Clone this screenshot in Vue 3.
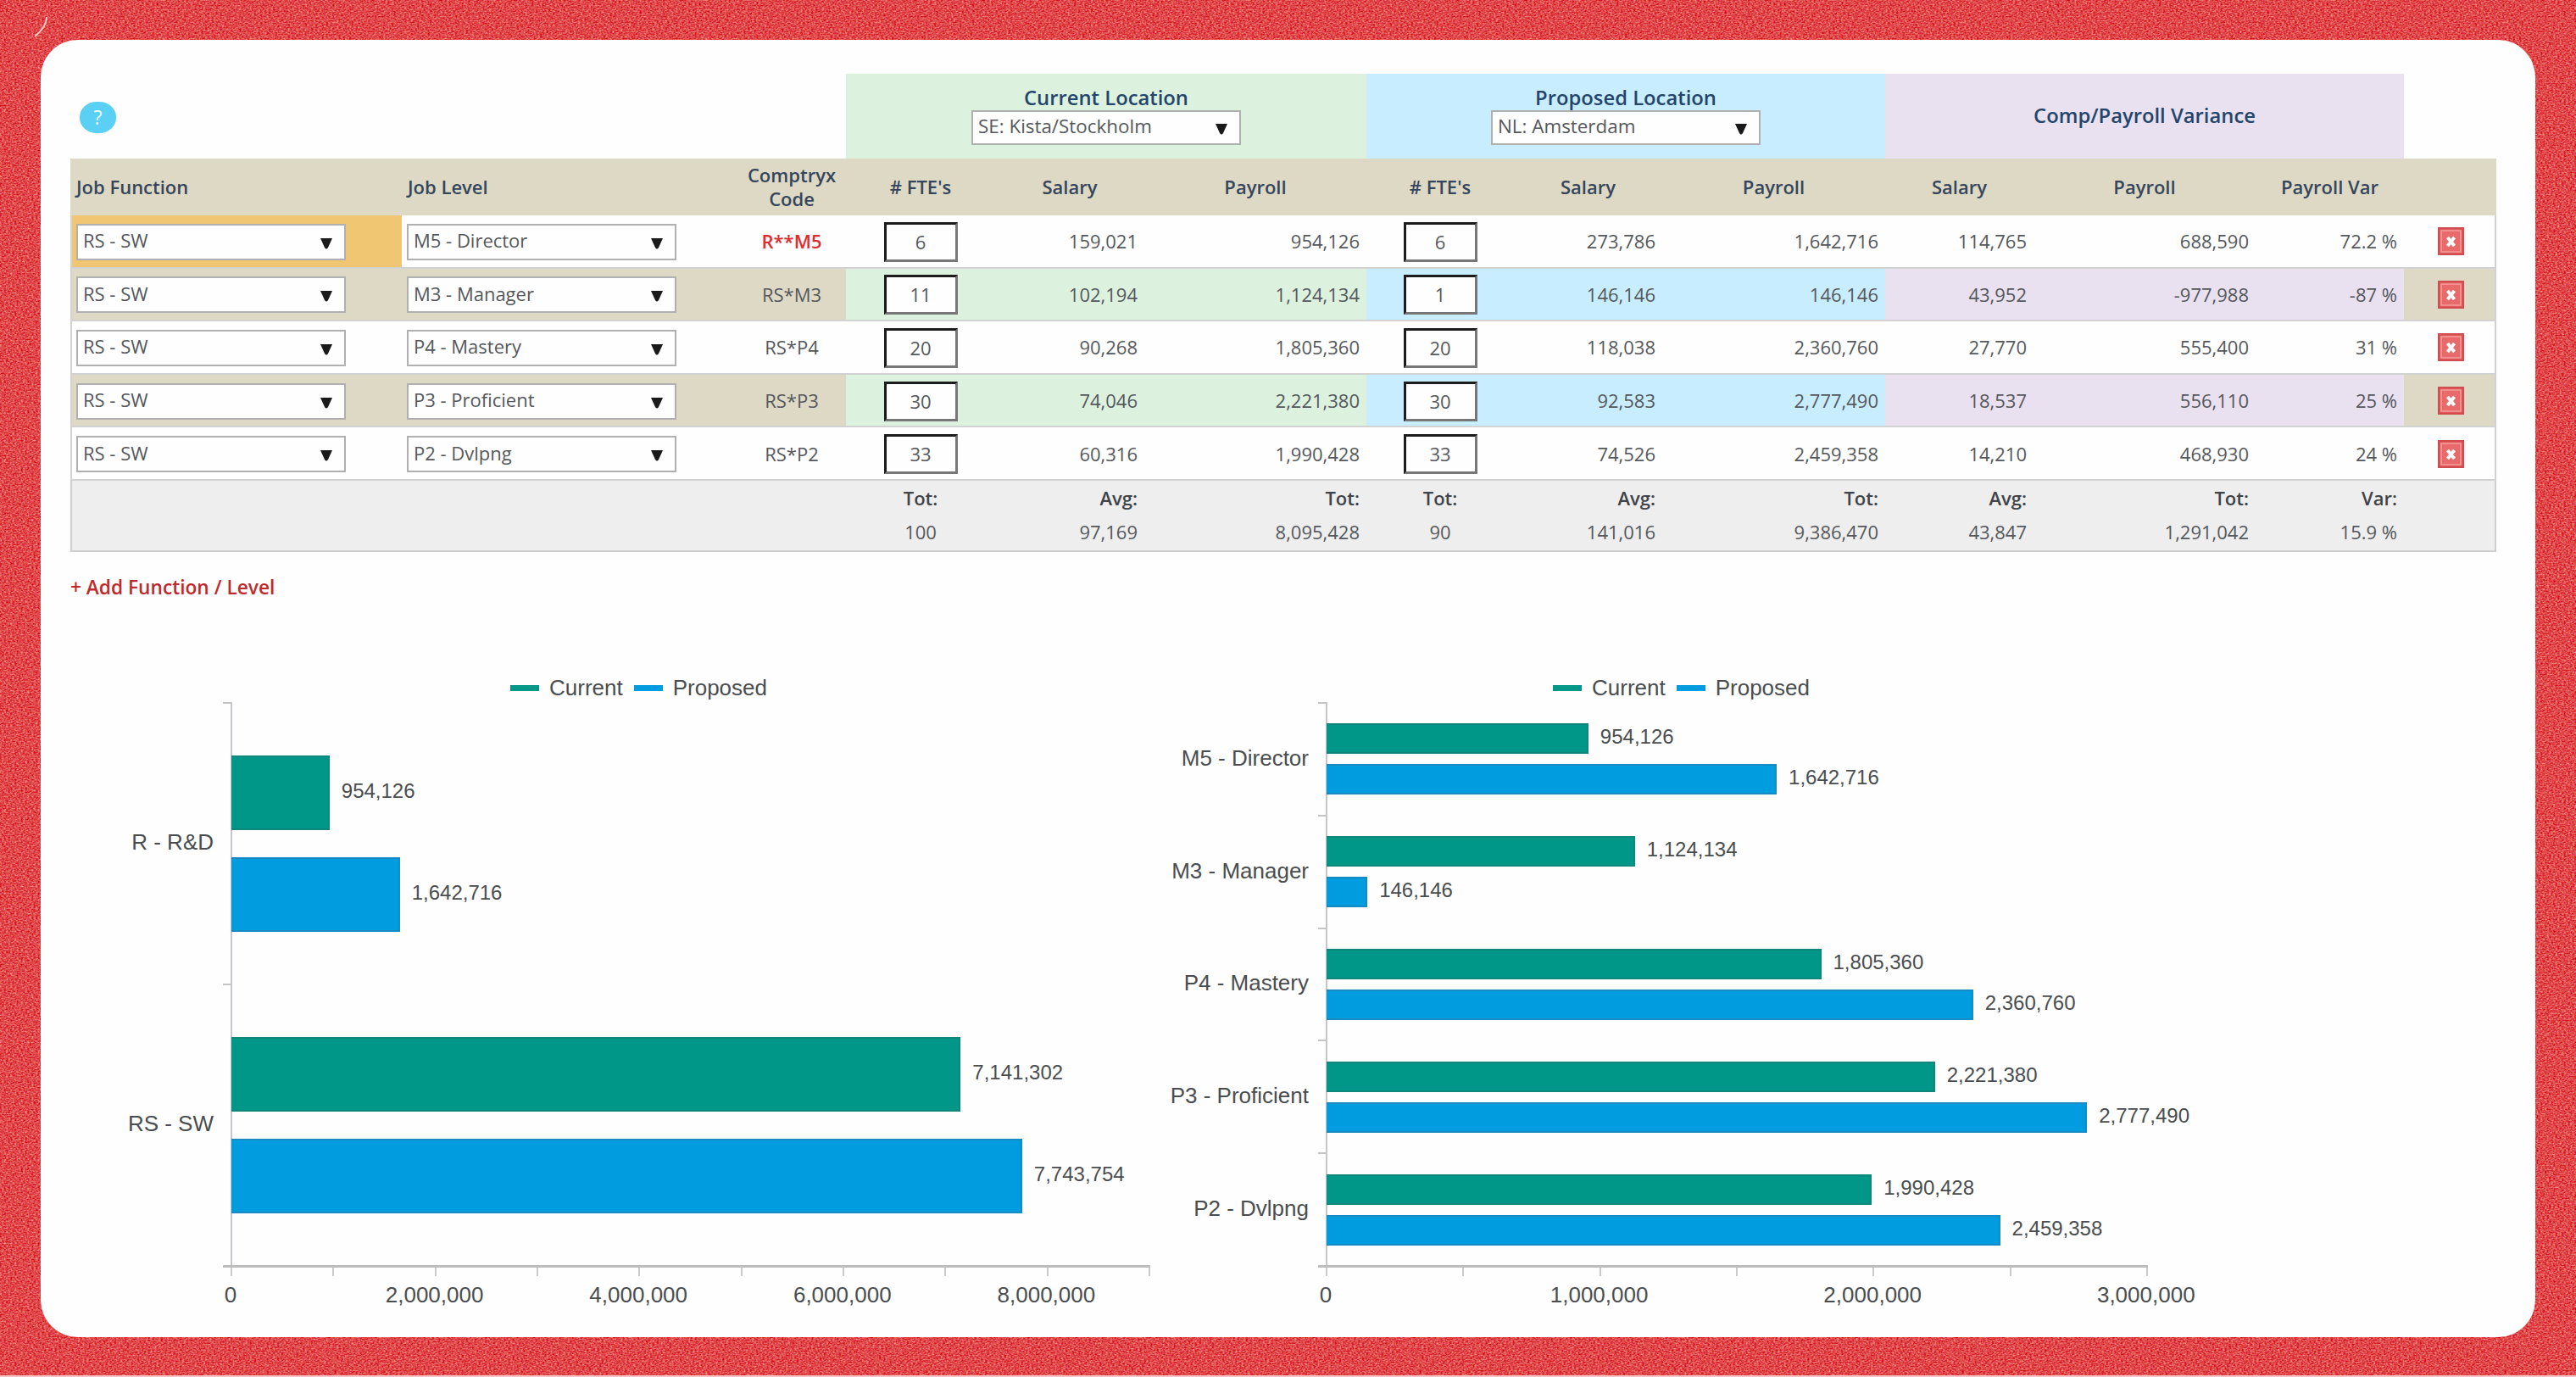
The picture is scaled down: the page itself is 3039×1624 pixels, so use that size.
<script setup>
const groups = [
  { title: 'Current Location', location: 'SE: Kista/Stockholm', tone: 'green' },
  { title: 'Proposed Location', location: 'NL: Amsterdam', tone: 'blue' },
  { title: 'Comp/Payroll Variance', location: '', tone: 'purple' },
]

const columns = [
  { label: 'Job Function', left: true },
  { label: 'Job Level', left: true },
  { label: 'Comptryx Code' },
  { label: "# FTE's" },
  { label: 'Salary' },
  { label: 'Payroll' },
  { label: "# FTE's" },
  { label: 'Salary' },
  { label: 'Payroll' },
  { label: 'Salary' },
  { label: 'Payroll' },
  { label: 'Payroll Var' },
  { label: '' },
]

const rows = [
  {
    func: 'RS - SW', level: 'M5 - Director', code: 'R**M5', invalid: true,
    current: ['6', '159,021', '954,126'],
    proposed: ['6', '273,786', '1,642,716'],
    variance: ['114,765', '688,590', '72.2 %'],
  },
  {
    func: 'RS - SW', level: 'M3 - Manager', code: 'RS*M3',
    current: ['11', '102,194', '1,124,134'],
    proposed: ['1', '146,146', '146,146'],
    variance: ['43,952', '-977,988', '-87 %'],
  },
  {
    func: 'RS - SW', level: 'P4 - Mastery', code: 'RS*P4',
    current: ['20', '90,268', '1,805,360'],
    proposed: ['20', '118,038', '2,360,760'],
    variance: ['27,770', '555,400', '31 %'],
  },
  {
    func: 'RS - SW', level: 'P3 - Proficient', code: 'RS*P3',
    current: ['30', '74,046', '2,221,380'],
    proposed: ['30', '92,583', '2,777,490'],
    variance: ['18,537', '556,110', '25 %'],
  },
  {
    func: 'RS - SW', level: 'P2 - Dvlpng', code: 'RS*P2',
    current: ['33', '60,316', '1,990,428'],
    proposed: ['33', '74,526', '2,459,358'],
    variance: ['14,210', '468,930', '24 %'],
  },
]

const totals = [
  { label: 'Tot:', value: '100', center: true },
  { label: 'Avg:', value: '97,169' },
  { label: 'Tot:', value: '8,095,428' },
  { label: 'Tot:', value: '90', center: true },
  { label: 'Avg:', value: '141,016' },
  { label: 'Tot:', value: '9,386,470' },
  { label: 'Avg:', value: '43,847' },
  { label: 'Tot:', value: '1,291,042' },
  { label: 'Var:', value: '15.9 %' },
]

const charts = [
  {
    name: 'by-function',
    max: 9000000,
    width: 1083,
    ticks: 9,
    axisLabels: [0, 2000000, 4000000, 6000000, 8000000],
    labelStep: 240.6,
    groups: [
      { label: 'R - R&D', current: 954126, proposed: 1642716 },
      { label: 'RS - SW', current: 7141302, proposed: 7743754 },
    ],
  },
  {
    name: 'by-level',
    max: 3000000,
    width: 968,
    ticks: 6,
    axisLabels: [0, 1000000, 2000000, 3000000],
    labelStep: 322.6,
    groups: [
      { label: 'M5 - Director', current: 954126, proposed: 1642716 },
      { label: 'M3 - Manager', current: 1124134, proposed: 146146 },
      { label: 'P4 - Mastery', current: 1805360, proposed: 2360760 },
      { label: 'P3 - Proficient', current: 2221380, proposed: 2777490 },
      { label: 'P2 - Dvlpng', current: 1990428, proposed: 2459358 },
    ],
  },
]

function barWidth(chart, value) {
  return (value / chart.max) * chart.width + 1 + 'px'
}

function format(value) {
  return value.toLocaleString('en-US')
}
</script>

<template>
  <div class="page">
    <svg class="grain" width="3039" height="1624">
      <filter id="grain" x="0" y="0" width="100%" height="100%" color-interpolation-filters="sRGB">
        <feTurbulence type="fractalNoise" baseFrequency="0.4 0.62" numOctaves="2" seed="4" />
        <feColorMatrix
          values="0.22 0 0 0 0.77
                  0.85 0.15 0 0 -0.22
                  0.7 0 0.3 0 -0.21
                  0 0 0 0 1"
        />
      </filter>
      <rect width="3039" height="1624" filter="url(#grain)" />
      <path d="M55 20Q55 32 41 43" fill="none" stroke="#f6c9c6" stroke-width="2" />
    </svg>

    <div class="card">
      <div class="group-row">
        <div class="help-cell"><span class="help">?</span></div>
        <div v-for="group in groups" :key="group.title" class="group" :class="group.tone">
          <div class="group-title">{{ group.title }}</div>
          <div v-if="group.location" class="select">
            <span>{{ group.location }}</span>
            <svg class="arrow" viewBox="0 0 14 13"><path d="M0 0H14L9 11Q7 14 5 11Z" /></svg>
          </div>
        </div>
      </div>

      <div class="table">
        <div class="row head">
          <div v-for="(col, i) in columns" :key="i" class="cell" :class="{ left: col.left }">
            <span>{{ col.label }}</span>
          </div>
        </div>

        <div v-for="row in rows" :key="row.code" class="row body">
          <div class="cell left" :class="{ warn: row.invalid }">
            <div class="select">
              <span>{{ row.func }}</span>
              <svg class="arrow" viewBox="0 0 14 13"><path d="M0 0H14L9 11Q7 14 5 11Z" /></svg>
            </div>
          </div>
          <div class="cell left">
            <div class="select">
              <span>{{ row.level }}</span>
              <svg class="arrow" viewBox="0 0 14 13"><path d="M0 0H14L9 11Q7 14 5 11Z" /></svg>
            </div>
          </div>
          <div class="cell" :class="{ invalid: row.invalid }">{{ row.code }}</div>
          <div class="cell green"><div class="fte">{{ row.current[0] }}</div></div>
          <div class="cell num green">{{ row.current[1] }}</div>
          <div class="cell num green">{{ row.current[2] }}</div>
          <div class="cell blue"><div class="fte">{{ row.proposed[0] }}</div></div>
          <div class="cell num blue">{{ row.proposed[1] }}</div>
          <div class="cell num blue">{{ row.proposed[2] }}</div>
          <div v-for="value in row.variance" :key="value" class="cell num purple">{{ value }}</div>
          <div class="cell">
            <svg class="remove" viewBox="0 0 31 33">
              <rect x="1" y="1" width="29" height="31" fill="#e4595a" stroke="#cf4d50" stroke-width="2" />
              <rect x="4" y="4" width="23" height="25" fill="#e86a6a" stroke="#f3a09f" stroke-width="1.5" />
              <path d="M11.5 12L19.5 22M19.5 12L11.5 22" stroke="#fff" stroke-width="4" />
            </svg>
          </div>
        </div>

        <div class="row foot">
          <div class="cell foot-space"></div>
          <div v-for="(total, i) in totals" :key="i" class="total" :class="{ center: total.center }">
            <b>{{ total.label }}</b>
            <span>{{ total.value }}</span>
          </div>
        </div>
      </div>

      <div class="add">+ Add Function / Level</div>

      <div class="charts">
        <div v-for="chart in charts" :key="chart.name" class="chart" :class="chart.name">
          <div class="legend">
            <i class="swatch current"></i><span>Current</span>
            <i class="swatch proposed"></i><span>Proposed</span>
          </div>
          <div class="plot">
            <div v-for="group in chart.groups" :key="group.label" class="chart-group">
              <div class="category">{{ group.label }}</div>
              <div class="mark"></div>
              <div class="bars">
                <div class="bar-line">
                  <div class="bar current" :style="{ width: barWidth(chart, group.current) }"></div>
                  <span>{{ format(group.current) }}</span>
                </div>
                <div class="bar-line">
                  <div class="bar proposed" :style="{ width: barWidth(chart, group.proposed) }"></div>
                  <span>{{ format(group.proposed) }}</span>
                </div>
              </div>
            </div>
          </div>
          <div class="ticks" :style="{ width: chart.width + 11 + 'px' }">
            <i v-for="n in chart.ticks" :key="n"></i>
          </div>
          <div class="axis-labels">
            <span
              v-for="value in chart.axisLabels"
              :key="value"
              :style="{ width: chart.labelStep + 'px', marginLeft: value === 0 ? -chart.labelStep / 2 + 'px' : 0 }"
            >{{ format(value) }}</span>
          </div>
        </div>
      </div>
    </div>
  </div>
</template>

<style>
body {
  margin: 0;
  background: #df4044;
}
</style>

<style scoped>
.page {
  position: relative;
  width: 3039px;
  height: 1624px;
  padding: 47px 48px 0 48px;
  box-sizing: border-box;
  overflow: hidden;
  border-bottom: 2px solid #f6c4c6;
  background: #df4044;
  font-family: 'Open Sans', 'Noto Sans', sans-serif;
  font-size: 22px;
  color: #55585c;
}

.page * {
  box-sizing: border-box;
}

.grain {
  position: absolute;
  left: 0;
  top: 0;
}

.card {
  position: relative;
  height: 1530px;
  padding: 40px 46px 0 35px;
  border-radius: 44px;
  background: #fefefe;
}

.group-row {
  display: grid;
  grid-template-columns: 915px 614px 612px 612px;
  height: 100px;
}

.help-cell {
  display: flex;
  align-items: center;
  padding: 3px 0 0 11px;
}

.help {
  width: 43px;
  height: 37px;
  border-radius: 20px / 18px;
  background: #59d0f4;
  color: #e8fbff;
  font-size: 23px;
  line-height: 37px;
  text-align: center;
}

.group {
  display: flex;
  flex-direction: column;
  align-items: center;
  justify-content: center;
  padding-bottom: 2px;
}

.group-title {
  height: 29px;
  font-weight: 600;
  font-size: 23.8px;
  line-height: 29px;
  color: #24456b;
}

.group .select {
  height: 41px;
}

.group .select span {
  font-size: 22.4px;
}

.green {
  background: #dcf2df;
}

.blue {
  background: #c8edff;
}

.purple {
  background: #e9e0f0;
}

.select {
  display: flex;
  align-items: center;
  justify-content: space-between;
  width: 318px;
  height: 43px;
  padding: 0 14px 4px 6px;
  border: 2px solid #b0b0b0;
  background: #fefefe;
}

.arrow {
  width: 14px;
  height: 13px;
  margin-top: 8px;
  fill: #1a1a1a;
}

.row {
  display: grid;
  grid-template-columns: 391px 396px 128px 176px 176px 262px 174px 175px 263px 175px 262px 175px 108px;
}

.cell {
  display: flex;
  align-items: center;
  justify-content: center;
  min-width: 0;
}

.cell.left {
  justify-content: flex-start;
  padding-left: 6px;
}

.cell.num {
  justify-content: flex-end;
  padding-right: 8px;
}

.head {
  height: 67px;
  padding-bottom: 2px;
  background: #ded9c5;
  color: #35465c;
  font-weight: 600;
  line-height: 28px;
  text-align: center;
}

.head .left {
  padding-left: 7px;
}

.body {
  grid-template-columns: 389px 396px 128px 176px 176px 262px 174px 175px 263px 175px 262px 175px 106px;
  height: 62.6px;
  border: solid #d2d2d2;
  border-width: 0 2px 2px;
}

.body:nth-child(odd) {
  background: #ded9c5;
}

.body:nth-child(even) .cell {
  background: none;
}

.body .cell:first-child {
  padding-left: 5px;
}

.body .select,
.body .fte {
  position: relative;
  top: 1px;
}

.body:nth-child(even) .warn {
  background: #f1c672;
}

.invalid {
  color: #e02b30;
  font-weight: 600;
}

.fte {
  width: 87px;
  height: 47px;
  border: 3px solid #1c1c1c;
  border-right-color: #777;
  border-bottom-color: #777;
  background: #fefefe;
  line-height: 40px;
  text-align: center;
}

.remove {
  width: 31px;
  height: 33px;
  margin: 1px 0 0 4px;
}

.foot {
  grid-template-columns: 389px 396px 128px 176px 176px 262px 174px 175px 263px 175px 262px 175px 106px;
  height: 84px;
  border: solid #cfcfcf;
  border-width: 0 2px 2px;
  background: #eeeeee;
}

.foot-space {
  grid-column: span 3;
}

.total {
  display: flex;
  flex-direction: column;
  padding: 0 8px 0 0;
  line-height: 40px;
  text-align: right;
}

.total b {
  font-weight: 600;
  color: #404448;
}

.total.center {
  padding: 0;
  text-align: center;
}

.add {
  height: 86px;
  color: #be2a2c;
  font-size: 22.7px;
  font-weight: 600;
  line-height: 83px;
}

.charts {
  display: flex;
  height: 840px;
  padding-top: 56px;
  font-family: 'Liberation Sans', Arial, sans-serif;
  font-size: 26px;
  color: #4a4d50;
}

.chart {
  display: flex;
  flex-direction: column;
  flex: none;
}

.by-function {
  width: 1292px;
}

.legend {
  display: flex;
  align-items: center;
  height: 35px;
  padding-top: 2px;
}

.by-function .legend {
  padding-left: 519px;
}

.by-level .legend {
  padding-left: 457px;
}

.swatch {
  width: 34px;
  height: 7px;
  margin-right: 12px;
}

.legend span {
  margin-right: 13px;
}

.plot {
  display: flex;
  flex-direction: column;
  height: 664px;
}

.chart-group {
  display: flex;
  flex: 1;
}

.category {
  display: flex;
  align-items: center;
  justify-content: flex-end;
  width: 180px;
  padding: 0 11px 0 0;
  white-space: nowrap;
}

.mark {
  width: 9px;
  border-top: 2px solid #c4c4c4;
}

.bars {
  display: flex;
  flex-direction: column;
  justify-content: center;
  gap: 32px;
  padding-top: 2px;
  border-left: 2px solid #c6c6cc;
}

.by-level .bars {
  gap: 12px;
}

.bar-line {
  display: flex;
  align-items: center;
  height: 88px;
  font-size: 24px;
}

.by-level .bar-line {
  height: 36px;
}

.bar {
  height: 100%;
  margin-left: -1px;
}

.current {
  background: #009688;
}

.proposed {
  background: #009ce0;
}

.bar.current {
  border: 2px solid #0f877d;
  border-left: none;
}

.bar.proposed {
  border: 2px solid #168bc2;
  border-left: none;
}

.bar-line span {
  margin: -4px 0 0 14px;
}

.ticks {
  display: flex;
  height: 13px;
  margin-left: 180px;
  padding-left: 9px;
  border-top: 3px solid #bdbdbd;
}

.ticks i {
  flex: 1;
  border-left: 2px solid #cacaca;
}

.ticks i:last-child {
  border-right: 2px solid #cacaca;
}

.axis-labels {
  display: flex;
  margin: 7px 0 0 189px;
}

.axis-labels span {
  flex: none;
  text-align: center;
}
</style>
